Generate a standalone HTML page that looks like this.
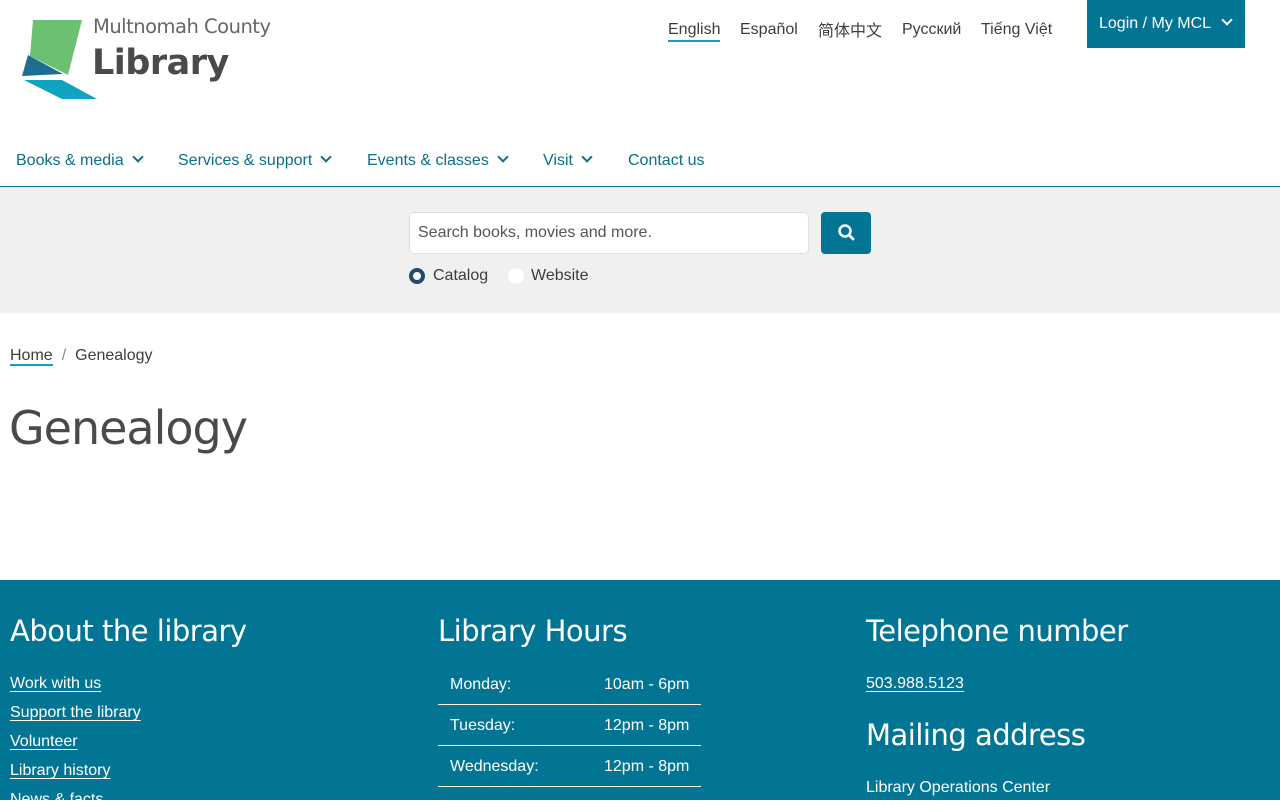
<!DOCTYPE html>
<html><head><meta charset="utf-8"><style>
*{margin:0;padding:0;box-sizing:border-box}
body{width:1280px;height:800px;overflow:hidden;font-family:"Liberation Sans",sans-serif;background:#fff;color:#3d3d3d;position:relative}
.abs{position:absolute;line-height:20px}
.lang{top:20px;font-size:16px;color:#3d3d3d}
.nav{top:151px;font-size:16px;color:#0b6f86}
.chev{display:inline-block;width:8px;height:8px;border-right:2px solid #0b6f86;border-bottom:2px solid #0b6f86;transform:rotate(45deg);margin-left:10px;position:relative;top:-4px}
.foot{top:580px;left:0;width:1280px;height:220px;background:#037594;color:#fff}
.foot h2{position:absolute;font-weight:400;font-size:29px;line-height:36px;color:#fff;font-family:"DejaVu Sans","Liberation Sans",sans-serif;letter-spacing:-0.5px}
.fl{position:absolute;left:10px;font-size:16px;line-height:20px;color:#fff;text-decoration:underline;text-underline-offset:3px}
.row{position:absolute;left:438px;width:263px;height:41px;border-bottom:1px solid #fff;font-size:16px;color:#fff}
.row span{position:absolute;top:11px;line-height:20px}
</style></head><body>
<svg class="abs" style="left:0;top:0" width="100" height="110">
<polygon points="33,20 82,20 68,75 30,56" fill="#6cc072"/>
<polygon points="28,55 63,74 22,76" fill="#1d6e92"/>
<polygon points="24,80 62,80 97,99 62,99" fill="#10a3bf"/>
</svg>
<div class="abs" style="left:93px;top:17px;font-size:19.5px;color:#666;font-family:'DejaVu Sans',sans-serif;letter-spacing:-0.5px">Multnomah County</div>
<div class="abs" style="left:92px;top:48px;font-size:35px;color:#4a4a4a;font-weight:bold;font-family:'DejaVu Sans',sans-serif;letter-spacing:-0.5px;line-height:30px">Library</div>
<div class="abs lang" style="left:668px;border-bottom:2px solid #10a3bf;padding-bottom:0">English</div>
<div class="abs lang" style="left:740px">Español</div>
<div class="abs lang" style="left:818px;font-family:'Noto Sans CJK SC',sans-serif;top:18px;line-height:22px">简体中文</div>
<div class="abs lang" style="left:902px">Русский</div>
<div class="abs lang" style="left:981px">Tiếng Việt</div>
<div class="abs" style="left:1087px;top:0;width:158px;height:48px;background:#037594;color:#fff;font-size:16px;padding:14px 0 0 12px">Login / My MCL<span class="chev" style="border-color:#fff;margin-left:12px"></span></div>
<div class="abs nav" style="left:16px">Books &amp; media<span class="chev"></span></div>
<div class="abs nav" style="left:178px">Services &amp; support<span class="chev"></span></div>
<div class="abs nav" style="left:367px">Events &amp; classes<span class="chev"></span></div>
<div class="abs nav" style="left:543px">Visit<span class="chev"></span></div>
<div class="abs nav" style="left:628px">Contact us</div>
<div class="abs" style="left:0;top:186px;width:1280px;height:127px;background:#f0f0f0;border-top:1px solid #0b6f86"></div>
<div class="abs" style="left:409px;top:212px;width:400px;height:42px;background:#fff;border:1px solid #ddd;border-radius:5px;font-size:16px;color:#555;padding:10px 8px">Search books, movies and more.</div>
<div class="abs" style="left:821px;top:212px;width:50px;height:42px;background:#037594;border-radius:4px">
<svg width="50" height="42"><circle cx="24" cy="19" r="5.5" fill="none" stroke="#fff" stroke-width="2.5"/><line x1="28" y1="23" x2="32" y2="27" stroke="#fff" stroke-width="2.8" stroke-linecap="round"/></svg></div>
<div class="abs" style="left:409px;top:268px;width:16px;height:16px;border-radius:50%;border:4.5px solid #244a6e;background:#fff"></div>
<div class="abs" style="left:433px;top:266px;font-size:16px">Catalog</div>
<div class="abs" style="left:508px;top:268px;width:16px;height:16px;border-radius:50%;background:#fff"></div>
<div class="abs" style="left:531px;top:266px;font-size:16px">Website</div>
<div class="abs" style="left:10px;top:346px;font-size:16px;color:#3d3d3d"><span style="border-bottom:2px solid #10a3bf">Home</span><span style="color:#888;margin:0 9px">/</span>Genealogy</div>
<div class="abs" style="left:9px;top:403px;font-size:46px;line-height:50px;color:#4a4a4a;font-family:'DejaVu Sans',sans-serif;letter-spacing:-1px">Genealogy</div>
<div class="abs foot">
<h2 style="left:10px;top:33px">About the library</h2>
<h2 style="left:438px;top:33px">Library Hours</h2>
<h2 style="left:866px;top:33px">Telephone number</h2>
<h2 style="left:866px;top:137px">Mailing address</h2>
<div class="fl" style="top:94px">Work with us</div>
<div class="fl" style="top:123px">Support the library</div>
<div class="fl" style="top:152px">Volunteer</div>
<div class="fl" style="top:181px">Library history</div>
<div class="fl" style="top:210px">News &amp; facts</div>
<div class="row" style="top:84px"><span style="left:12px">Monday:</span><span style="left:166px">10am - 6pm</span></div>
<div class="row" style="top:125px"><span style="left:12px">Tuesday:</span><span style="left:166px">12pm - 8pm</span></div>
<div class="row" style="top:166px"><span style="left:12px">Wednesday:</span><span style="left:166px">12pm - 8pm</span></div>
<div class="fl" style="left:866px;top:94px">503.988.5123</div>
<div class="abs" style="left:866px;top:198px;font-size:16px;color:#fff">Library Operations Center</div>
</div>
</body></html>
